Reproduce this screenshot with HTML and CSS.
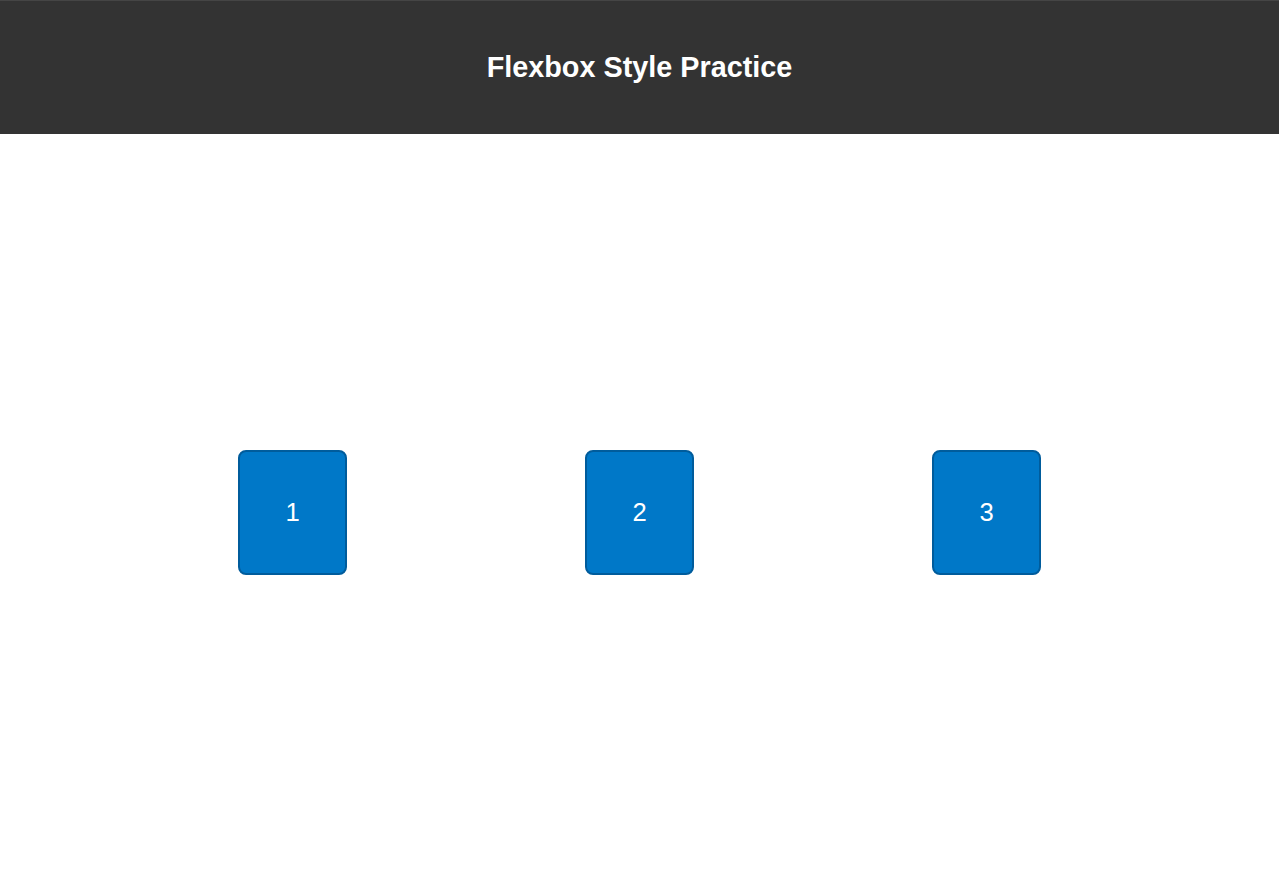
FILE: index.html
```html
<!DOCTYPE html>
<html lang="en">
<head>
<meta charset="utf-8">
<title>Flexbox Style Practice</title>
<link rel="stylesheet" href="styles.css">
</head>
<body>
<header class="site-header">
  <h1 class="site-title">Flexbox Style Practice</h1>
</header>
<main class="container">
  <div class="box">1</div>
  <div class="box">2</div>
  <div class="box">3</div>
</main>
</body>
</html>
```

FILE: styles.css
```css
* {
  box-sizing: border-box;
}

html, body {
  margin: 0;
  padding: 0;
}

body {
  font-family: "Liberation Sans", Arial, sans-serif;
  background: #ffffff;
  color: #000;
}

.site-header {
  height: 134px;
  background: #333333;
  border-top: 1px solid #454545;
  display: flex;
  align-items: center;
  justify-content: center;
}

.site-title {
  margin: 0;
  color: #ffffff;
  font-size: 28.8px;
  font-weight: bold;
  line-height: 1.2;
}

.container {
  height: 753px;
  display: flex;
  justify-content: space-evenly;
  align-items: center;
  padding-top: 3px;
}

.box {
  width: 109px;
  height: 125px;
  background: #0078c8;
  border: 2px solid #005c9c;
  border-radius: 8px;
  color: #ffffff;
  font-size: 25.6px;
  display: flex;
  align-items: center;
  justify-content: center;
}
```
